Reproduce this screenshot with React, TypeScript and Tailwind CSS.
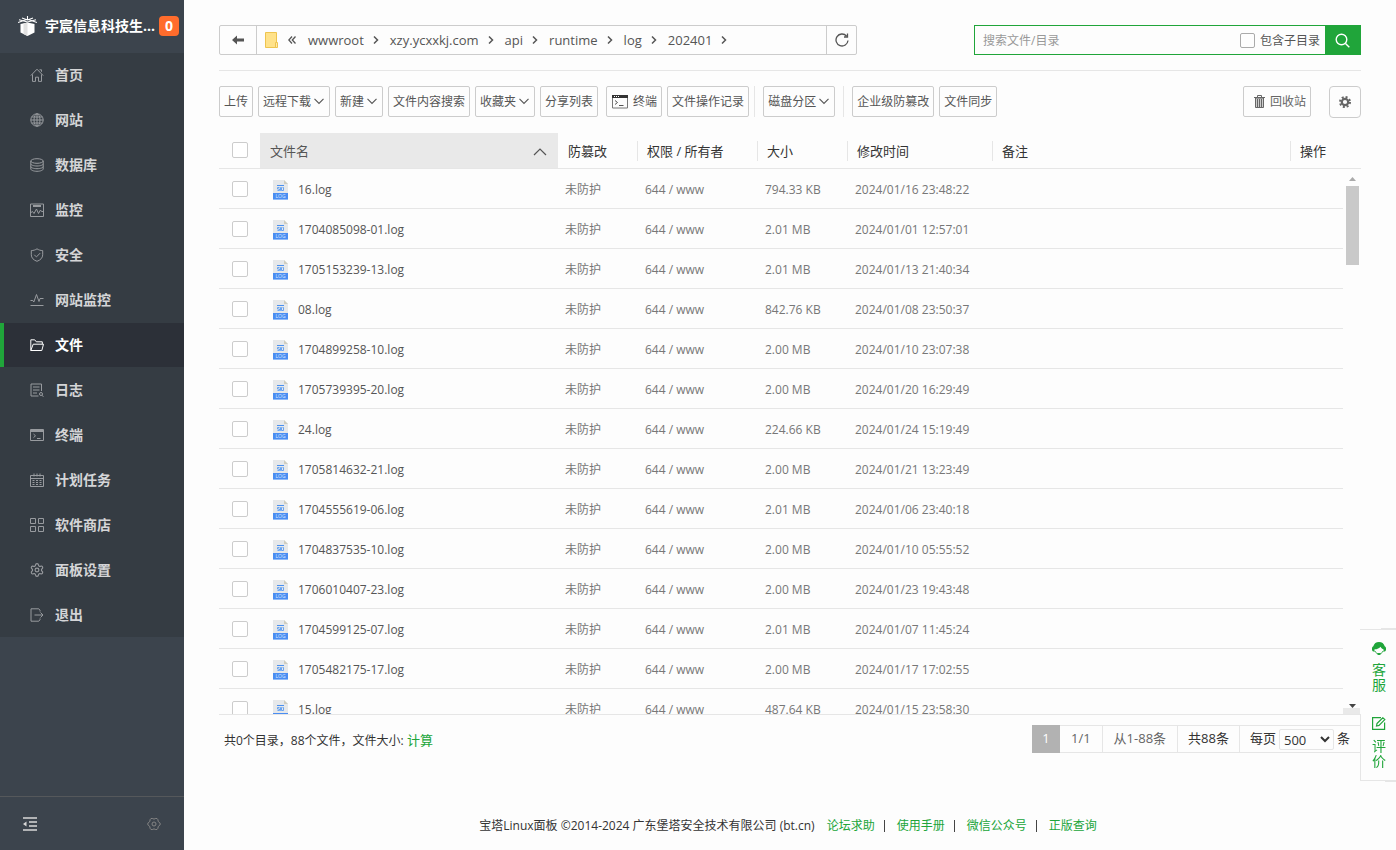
import React from 'react';
import { Settings } from 'lucide-react';

const stroke = {
  fill: 'none',
  stroke: 'currentColor',
  strokeWidth: 1,
};

const menu = [
  {
    label: '首页',
    icon: <path d="M.8 7.6 7 1.2l6.2 6.4M2.5 6.4v7h3V9.2h3v4.2h3v-7M9.5 1.8h2v2" />,
  },
  {
    label: '网站',
    icon: (
      <>
        <circle cx="7" cy="7" r="6.2" />
        <ellipse cx="7" cy="7" rx="3" ry="6.2" />
        <path d="M7 .8v12.4M.8 7h12.4M1.6 4h10.8M1.6 10h10.8" />
      </>
    ),
  },
  {
    label: '数据库',
    icon: (
      <>
        <ellipse cx="7" cy="3" rx="6.2" ry="2.3" />
        <path d="M.8 3v8c0 1.2 2.8 2.3 6.2 2.3s6.2-1.1 6.2-2.3V3M.8 5.8C.8 7 3.6 8 7 8s6.2-1 6.2-2.2M.8 8.5c0 1.2 2.8 2.2 6.2 2.2s6.2-1 6.2-2.2" />
      </>
    ),
  },
  {
    label: '监控',
    icon: <path d="M.5 1h13v12.500H.5zM3 2.500h8M3 3.500h8M1 9.500l1.500-1 1.500 2 2.500-4.500 2 4.500 2-3.500 1 1.500h2" />,
  },
  {
    label: '安全',
    icon: <path d="M7 .8c1.600 1.200 3.600 1.700 5.700 1.800v4.200c0 3-2.200 5.300-5.700 6.500C3.500 12.100 1.300 9.800 1.300 6.800V2.600C3.400 2.500 5.400 2 7 .8zM4.300 6.800l2.100 2.100 3.800-3.800" />,
  },
  {
    label: '网站监控',
    icon: <path d="M.5 7.500h2.300L3.800 9 6.500 1.500l2.500 7L10 5.500h3.500M.5 12.500h13" />,
  },
  {
    label: '文件',
    icon: <path d="M.8 12.500V1.800h3.900l1.600 2h6v2.400M.8 12.500l2.400-6.300h10.300l-1.700 6.300z" />,
  },
  {
    label: '日志',
    icon: (
      <>
        <path d="M8.500 13H1V1h10.500v7M3 4h6.500M3 7h6.500M3 10h4" />
        <circle cx="11" cy="11" r="1.500" />
        <path d="m12 12.500 1.500 1" />
      </>
    ),
  },
  {
    label: '终端',
    icon: <path d="M.5 1.500h13v11H.5zM.5 2.500h13M.5 3.500h13M3.500 6l2 1.800-2 1.800M7 10.500h3.500" />,
  },
  {
    label: '计划任务',
    icon: <path d="M.5 2.500h13v11H.5zM.5 5.500h13M4 .5v3M7 .5v3M10 .5v3M2.500 7.500h2m1.500 0h2m1.500 0h2M2.500 9.500h2m1.500 0h2m1.500 0h2M2.500 11.500h2m1.500 0h2m1.500 0h2" />,
  },
  {
    label: '软件商店',
    icon: <path d="M.5.5h5v5h-5zM8.500.5h5v5h-5zM.5 8.500h5v5h-5zM8.500 8.500h5v5h-5z" />,
  },
  {
    label: '面板设置',
    icon: <Settings size={14} viewBox="1 1 22 22" strokeWidth={1.800} />,
  },
  {
    label: '退出',
    icon: <path d="M10 3.500V2.300L8.800.8H1v12.400h7.800l1.200-1.500v-1.200M4.500 7H13M10.500 4.500 13 7l-2.500 2.500" />,
  },
];

const files = [
  ['16.log', '794.33 KB', '2024/01/16 23:48:22'],
  ['1704085098-01.log', '2.01 MB', '2024/01/01 12:57:01'],
  ['1705153239-13.log', '2.01 MB', '2024/01/13 21:40:34'],
  ['08.log', '842.76 KB', '2024/01/08 23:50:37'],
  ['1704899258-10.log', '2.00 MB', '2024/01/10 23:07:38'],
  ['1705739395-20.log', '2.00 MB', '2024/01/20 16:29:49'],
  ['24.log', '224.66 KB', '2024/01/24 15:19:49'],
  ['1705814632-21.log', '2.00 MB', '2024/01/21 13:23:49'],
  ['1704555619-06.log', '2.01 MB', '2024/01/06 23:40:18'],
  ['1704837535-10.log', '2.00 MB', '2024/01/10 05:55:52'],
  ['1706010407-23.log', '2.00 MB', '2024/01/23 19:43:48'],
  ['1704599125-07.log', '2.01 MB', '2024/01/07 11:45:24'],
  ['1705482175-17.log', '2.00 MB', '2024/01/17 17:02:55'],
  ['15.log', '487.64 KB', '2024/01/15 23:58:30'],
];

const crumbs = ['wwwroot', 'xzy.ycxxkj.com', 'api', 'runtime', 'log', '202401'];

const footerLinks = ['论坛求助', '使用手册', '微信公众号', '正版查询'];

const checkboxClass =
  'block size-4 appearance-none rounded-[2px] border border-[#ccc] bg-white checked:bg-[#20a53a]';

const cellClass = 'border-b border-[#e6e6e6] pt-1 pl-[10px]';

const ChevronDown = () => (
  <svg width="10" height="7" viewBox="0 0 10 7" {...stroke} strokeWidth={1.1}>
    <path d="m.5.8 4.500 4.700L9.500.8" />
  </svg>
);

const TerminalIcon = () => (
  <svg width="16" height="14" viewBox="0 0 16 14" {...stroke}>
    <path d="M.5.5h15v12.500H.5z" stroke="#777" />
    <path d="M0 0h16v3H0z" fill="#333" stroke="none" />
    <path d="M2 1.500h1m1 0h1m1 0h1" stroke="#fff" />
    <path d="m3 5.500 2.500 2L3 9.500M7 10.500h4.500" stroke="#555" />
  </svg>
);

const TrashIcon = () => (
  <svg width="11" height="13" viewBox="0 0 11 13" {...stroke}>
    <path d="M1.500 3h8v9.500h-8z" fill="#ccc" />
    <path d="M0 2.500h11M3.500 2V.5h4V2M3.500 4v8M5.500 4v8M7.500 4v8" />
  </svg>
);

const LogIcon = () => (
  <svg className="shrink-0" width="15" height="20" viewBox="0 0 15 20">
    <path d="M0 0h11l4 4v16H0z" fill="#e6e8ea" />
    <path d="M11 0v4h4z" fill="#cfcdc0" />
    <path d="M4 5.500h7" stroke="#4a90f0" />
    <path d="M6.500 7.500h-2v1.500h2v1.500h-2M7.500 7.500h1v3h-1zM9.500 7.500h1v3H9" fill="none" stroke="#5a9cf3" strokeWidth=".9" />
    <path d="M0 13h15v6.500H0z" fill="#4a8df2" />
    <path d="M0 19.500h15" stroke="#8fbaf8" />
    <text x="7.500" y="18.300" textAnchor="middle" fontSize="5" fill="#d8e8ff">LOG</text>
  </svg>
);

type ToolButtonProps = {
  children: React.ReactNode;
  icon?: React.ReactNode;
  dropdown?: boolean;
};

const ToolButton = ({ children, icon, dropdown }: ToolButtonProps) => (
  <button
    className={`flex h-[31px] shrink-0 items-center rounded-[2px] border border-[#ccc] text-xs whitespace-nowrap text-[#555] ${
      icon ? 'gap-[5px] pr-1 pl-[5px]' : dropdown ? 'gap-[3px] pr-[5px] pl-1' : 'px-1'
    }`}
  >
    {icon}
    {children}
    {dropdown && <ChevronDown />}
  </button>
);

const Divider = () => <span className="mr-[3px] h-[31px] w-px bg-[#e6e6e6]" />;

const Sidebar = () => (
  <aside className="flex w-[184px] shrink-0 flex-col bg-[#3c444d]">
    <div className="flex h-[53px] items-center pb-[2px] pl-[18px]">
      <svg className="mr-2 shrink-0" width="19" height="20" viewBox="0 0 19 20">
        <path d="M2.500 8 9.500 6.500l7 1.500v8.500l-7 3.500-7-3.500z" fill="#fff" />
        <path d="M9.500 6.500v13.500l-4-2V7.500z" fill="#e2e2e2" />
        <path d="M0 6.500 9.500 3.300 19 6.500M1 3.700l8.500 2.300L18 3.700M4 2l5.500 2L15 2M9.500 0v4" fill="none" stroke="#fff" strokeWidth="1.100" />
      </svg>
      <span className="w-[114px] truncate text-sm font-bold text-white">宇宸信息科技生...</span>
      <span className="flex size-5 items-center justify-center rounded bg-[#ff6c2c] text-sm font-bold text-white">0</span>
    </div>
    <nav className="flex flex-col gap-px bg-[#353c43]">
      {menu.map((item) => {
        const active = item.label === '文件';
        return (
          <a
            key={item.label}
            href="#"
            className={`flex h-11 items-center gap-[11px] border-l-4 pl-[26px] text-sm font-bold ${
              active ? 'border-[#20a53a] bg-[#2c3038] text-white' : 'border-transparent text-[#d4d5d7]'
            }`}
          >
            <svg className={active ? 'text-white' : 'text-[#989b9f]'} width="14" height="14" viewBox="0 0 14 14" {...stroke}>
              {item.icon}
            </svg>
            {item.label}
          </a>
        );
      })}
    </nav>
    <div className="mt-auto flex h-[54px] items-center justify-between border-t border-[#55585b] px-[23px]">
      <button aria-label="收起菜单" className="text-[#d8d8d8]">
        <svg width="14" height="14" viewBox="0 0 14 14" {...stroke}>
          <path d="M0 1h14M6 5h8M6 9h8M0 13h14" strokeWidth="1.500" />
          <path d="M0 7l3.500-2.500v5z" fill="currentColor" stroke="none" />
        </svg>
      </button>
      <button aria-label="设置" className="text-[#858585]">
        <svg width="14" height="14" viewBox="0 0 14 14" {...stroke}>
          <path d="M11.200 4.500Q15.400 7 11.200 9.500 11.100 14.100 7 11.900 2.900 14.100 2.800 9.500-1.400 7 2.800 4.500 2.900-.1 7 2.100 11.100-.1 11.200 4.500z" />
          <circle cx="7" cy="7" r="2" />
        </svg>
      </button>
    </div>
  </aside>
);

const PathBar = () => (
  <div className="flex h-[30px] w-[638px] items-stretch rounded-[2px] border border-[#ccc] text-[#555]">
    <button aria-label="返回" className="flex w-[37px] items-center justify-center border-r border-[#ccc]">
      <svg width="12" height="10" viewBox="0 0 12 10" fill="currentColor">
        <path d="M0 5 5 .5v3h7v3H5v3z" />
      </svg>
    </button>
    <div className="flex flex-1 items-center pl-2 text-[13px]">
      <svg width="13" height="16" viewBox="0 0 13 16">
        <path d="M.5.5h11v15H.5z" fill="#ffe28a" stroke="#eec44f" />
        <path d="M10.500 10.500h2v5h-2z" fill="#ffe9a8" stroke="#eec44f" />
      </svg>
      <svg className="mr-3 ml-[10px]" width="8" height="8" viewBox="0 0 8 8" {...stroke} strokeWidth={1.300}>
        <path d="M4 .5.8 4 4 7.500M7.500.5 4.300 4l3.200 3.500" />
      </svg>
      {crumbs.map((name) => (
        <React.Fragment key={name}>
          <a href="#" className="pt-px">{name}</a>
          <svg className="mr-[11px] ml-[9px]" width="6" height="8" viewBox="0 0 6 8" {...stroke} strokeWidth={1.500}>
            <path d="m1 .5 3.500 3.500L1 7.500" />
          </svg>
        </React.Fragment>
      ))}
    </div>
    <button aria-label="刷新" className="flex w-[30px] items-center justify-center border-l border-[#ccc]">
      <svg width="14" height="14" viewBox="0 0 14 14" {...stroke} strokeWidth={1.300}>
        <path d="M13 7.500A6 6 0 1 1 11.500 3M12.500.5v3.500H9" />
      </svg>
    </button>
  </div>
);

const SearchBar = () => (
  <form className="flex h-[30px] w-[387px] items-stretch border border-[#20a53a]">
    <input
      type="text"
      aria-label="搜索"
      placeholder="搜索文件/目录"
      className="min-w-0 flex-1 pt-[2px] pl-2 text-xs outline-none placeholder:text-[#999]"
    />
    <label className="flex items-center gap-[5px] pr-[5px] text-xs text-[#555]">
      <input type="checkbox" className="size-[15px] appearance-none rounded-[2px] border border-[#aaa]" />
      <span className="pt-[2px]">包含子目录</span>
    </label>
    <button type="button" aria-label="搜索文件" className="flex w-[35px] items-center justify-center bg-[#20a53a] text-white">
      <svg width="15" height="15" viewBox="0 0 15 15" {...stroke} strokeWidth={1.400}>
        <circle cx="6.500" cy="6.500" r="5.300" />
        <path d="m10.500 10.500 3.800 3.800" />
      </svg>
    </button>
  </form>
);

const Toolbar = () => (
  <div className="flex items-start gap-[5px] pt-[15px] pb-[15px]">
    <ToolButton>上传</ToolButton>
    <ToolButton dropdown>远程下载</ToolButton>
    <ToolButton dropdown>新建</ToolButton>
    <ToolButton>文件内容搜索</ToolButton>
    <ToolButton dropdown>收藏夹</ToolButton>
    <ToolButton>分享列表</ToolButton>
    <span className="w-[3px] -ml-[5px]" />
    <ToolButton icon={<TerminalIcon />}>终端</ToolButton>
    <ToolButton>文件操作记录</ToolButton>
    <Divider />
    <ToolButton dropdown>磁盘分区</ToolButton>
    <span className="w-[3px] -ml-[5px]" />
    <Divider />
    <ToolButton>企业级防篡改</ToolButton>
    <ToolButton>文件同步</ToolButton>
    <div className="ml-auto flex gap-[18px]">
      <button className="flex h-[31px] items-center gap-[5px] rounded-[2px] border border-[#ccc] pr-1 pl-[10px] text-xs text-[#666]">
        <TrashIcon />
        回收站
      </button>
      <button aria-label="文件设置" className="flex size-8 items-center justify-center rounded border border-[#ccc] text-[#666]">
        <svg width="12" height="12" viewBox="0 0 12 12" {...stroke}>
          <circle cx="6" cy="6" r="3.200" strokeWidth="2.200" />
          <circle cx="6" cy="6" r="5" strokeWidth="2" strokeDasharray="2 1.927" />
        </svg>
      </button>
    </div>
  </div>
);

const HeadCell = ({ children, line = true }: { children: string; line?: boolean }) => (
  <th className="p-0 pt-px font-normal">
    <div className={`h-5 border-l pl-[9px] leading-5 whitespace-nowrap ${line ? 'border-[#e6e6e6]' : 'border-transparent'}`}>
      {children}
    </div>
  </th>
);

const FileTable = () => (
  <>
    <table className="w-full shrink-0 table-fixed border-b border-[#e6e6e6] text-left text-[13px] text-[#333]">
      <colgroup>
        <col className="w-[41px]" />
        <col className="w-[298px]" />
        <col className="w-[79px]" />
        <col className="w-[120px]" />
        <col className="w-[90px]" />
        <col className="w-[145px]" />
        <col />
        <col className="w-[71px]" />
      </colgroup>
      <thead>
        <tr className="h-[35px]">
          <th className="p-0 pl-[13px]">
            <input type="checkbox" aria-label="全选" className={checkboxClass} />
          </th>
          <th className="bg-[#e9e9e9] p-0 px-[10px] pt-[2px] font-normal text-[#555]">
            <div className="flex items-center justify-between">
              文件名
              <svg className="mt-[2px] mr-px" width="14" height="8" viewBox="0 0 14 8" {...stroke} strokeWidth={1.200}>
                <path d="m1 7 6-6 6 6" />
              </svg>
            </div>
          </th>
          <HeadCell line={false}>防篡改</HeadCell>
          <HeadCell>权限 / 所有者</HeadCell>
          <HeadCell>大小</HeadCell>
          <HeadCell>修改时间</HeadCell>
          <HeadCell>备注</HeadCell>
          <HeadCell>操作</HeadCell>
        </tr>
      </thead>
    </table>
    <div className="flex min-h-0 flex-1 border-b border-[#e6e6e6]">
      <div className="flex-1 overflow-y-auto [scrollbar-width:none]">
        <table className="w-full table-fixed border-separate border-spacing-0 text-xs text-[#777]">
          <colgroup>
            <col className="w-[41px]" />
            <col className="w-[295px]" />
            <col className="w-[80px]" />
            <col className="w-[120px]" />
            <col className="w-[90px]" />
            <col className="w-[145px]" />
            <col />
          </colgroup>
          <tbody>
            {files.map(([name, size, time]) => (
              <tr key={name} className="h-10">
                <td className="border-b border-[#e6e6e6] pt-px pl-[13px]">
                  <input type="checkbox" aria-label={name} className={checkboxClass} />
                </td>
                <td className="border-b border-[#e6e6e6] pt-1 pl-[13px]">
                  <div className="flex items-center gap-[10px] text-[#555]">
                    <LogIcon />
                    {name}
                  </div>
                </td>
                <td className={cellClass}>未防护</td>
                <td className={cellClass}>644 / www</td>
                <td className={cellClass}>{size}</td>
                <td className={cellClass}>{time}</td>
                <td className={cellClass} />
              </tr>
            ))}
          </tbody>
        </table>
      </div>
      <div className="flex w-[18px] flex-col items-center pt-2">
        <svg width="7" height="4" viewBox="0 0 7 4" fill="#aaa">
          <path d="M3.500 0 7 4H0z" />
        </svg>
        <span className="mt-[5px] h-[79px] w-[13px] bg-[#c9c9c9]" />
        <svg className="mt-auto" width="7" height="4" viewBox="0 0 7 4" fill="#444">
          <path d="M3.500 4 7 0H0z" />
        </svg>
        <span className="h-[6px] w-full bg-[#e9e9e9]" />
      </div>
    </div>
  </>
);

const Pagination = () => (
  <div className="flex h-7 items-stretch text-[13px] text-[#333]">
    <button className="w-7 bg-[#b2b2b2] text-white">1</button>
    <span className="flex items-center border-y border-r border-[#e6e6e6] px-[11px] text-[#666]">1/1</span>
    <span className="flex items-center border-y border-r border-[#e6e6e6] px-[11px] text-[#666]">从1-88条</span>
    <span className="flex items-center border-y border-r border-[#e6e6e6] px-[10px]">共88条</span>
    <label className="flex items-center gap-[3px] border-y border-r border-[#e6e6e6] px-[10px]">
      每页
      <select className="h-[21px] w-[55px] rounded-[2px] border border-[#e6e6e6] bg-transparent pb-1 leading-none">
        <option>500</option>
      </select>
      条
    </label>
  </div>
);

const SideWidget = () => (
  <div className="fixed right-0 bottom-[69px] flex w-9 flex-col border-y border-[#e6e6e6] bg-[#fdfdfd] text-sm leading-[15px] text-[#20a53a]">
    <span className="absolute -top-[2px] right-0 h-[2px] w-[15px] bg-[#e6e6e6]" />
    <a href="#" className="flex h-[84px] flex-col items-center gap-[6px] pt-3 pl-[2px]">
      <svg width="14" height="14" viewBox="0 0 14 14">
        <path d="M7 0a6 6 0 0 0-5.700 4.300A2 2 0 0 0 0 6.300v1.200a2 2 0 0 0 2.500 2V7.300C5.200 7.300 7.500 6.200 8.500 4.700c.8 1.400 1.900 2.200 3 2.600v2.200a2 2 0 0 0 2.500-2V6.300a2 2 0 0 0-1.300-2A6 6 0 0 0 7 0z" fill="#20a53a" />
        <path d="M2.800 9c.8 1.700 2.200 2.700 4.200 2.700s3.400-1 4.200-2.700" fill="none" stroke="#20a53a" />
        <path d="M5.500 11.200h3V13h-3z" fill="#20a53a" />
      </svg>
      <span className="w-[14px]">客服</span>
    </a>
    <a href="#" className="flex h-[66px] flex-col items-center gap-2 border-l border-[#e6e6e6] pt-[3px] pl-px">
      <svg width="14" height="13" viewBox="0 0 14 13" {...stroke} strokeWidth={1.200}>
        <path d="M9 .6H.6v11.800h12V5.500M5 6.500 10.800.8l2 1.800L7 8.400l-2.500.6z" />
      </svg>
      <span className="w-[14px]">评价</span>
    </a>
    <span className="absolute right-0 -bottom-[2px] h-[2px] w-[11px] bg-[#e6e6e6]" />
  </div>
);

const App = () => {
  return (
    <div className="flex h-screen bg-[#fdfdfd] font-['Open_Sans','Noto_Sans_CJK_SC',sans-serif]">
      <Sidebar />
      <main className="flex min-w-0 flex-1 flex-col px-[35px] pt-[25px]">
        <div className="flex justify-between border-b border-[#e6e6e6] pb-[15px]">
          <PathBar />
          <SearchBar />
        </div>
        <Toolbar />
        <FileTable />
        <div className="flex items-center justify-between pt-[10px]">
          <div className="pt-[3px] pl-[5px] text-xs text-[#333]">
            共0个目录，88个文件，文件大小:{' '}
            <a href="#" className="text-[13px] text-[#20a53a]">计算</a>
          </div>
          <Pagination />
        </div>
        <footer className="mt-16 mb-[15px] flex h-[18px] items-center justify-center pr-1 text-xs text-[#333]">
          <span className="mr-3">宝塔Linux面板 ©2014-2024 广东堡塔安全技术有限公司 (bt.cn)</span>
          {footerLinks.map((link, i) => (
            <React.Fragment key={link}>
              {i > 0 && <span className="mr-3 ml-[9px] h-3 w-px bg-[#444]" />}
              <a href="#" className="text-[#20a53a]">{link}</a>
            </React.Fragment>
          ))}
        </footer>
      </main>
      <SideWidget />
    </div>
  );
};

export default App;
